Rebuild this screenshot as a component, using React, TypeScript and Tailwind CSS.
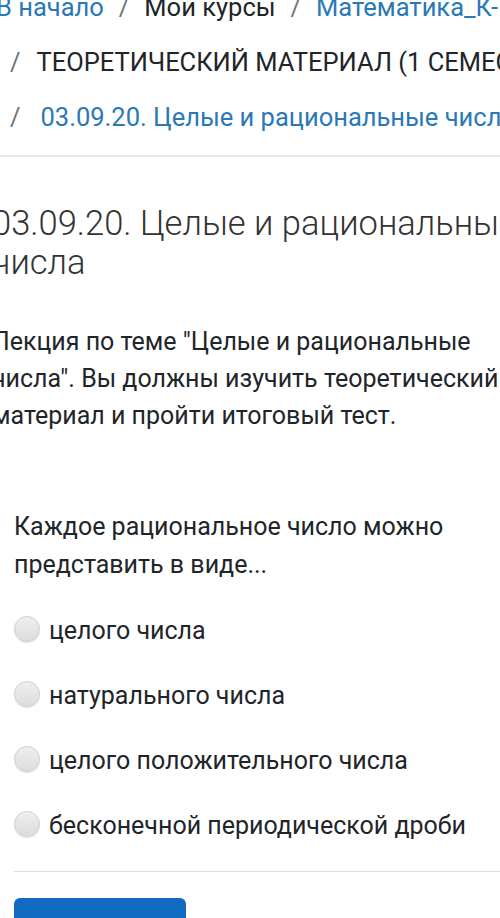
import React from "react";

const font = { fontFamily: "Roboto, 'Noto Sans', sans-serif" };

function Slash() {
  return <span className="text-[#6f757b] px-[15px]">/</span>;
}

function Radio() {
  return (
    <span className="shrink-0 w-[26px] h-[26px] rounded-full border border-[#cfcfcf] bg-gradient-to-b from-[#efefef] to-[#dcdcdc] shadow-[0_1px_1px_rgba(0,0,0,0.12)]" />
  );
}

const options = [
  "целого числа",
  "натурального числа",
  "целого положительного числа",
  "бесконечной периодической дроби",
];

export default function App() {
  return (
    <div className="w-[500px] h-[918px] overflow-hidden bg-white text-[#212529]" style={font}>
      {/* breadcrumb */}
      <div className="-mt-[20px] text-[25.5px] leading-[55px] whitespace-nowrap">
        <div className="-ml-[4px] flex">
          <span className="text-[#2a78b6]">В начало</span>
          <Slash />
          <span>Мои курсы</span>
          <Slash />
          <span className="text-[#2a78b6]">Математика_К-1 2020-2021</span>
        </div>
        <div className="flex pl-[10px]">
          <span className="text-[#6f757b] pr-[16px]">/</span>
          <span>ТЕОРЕТИЧЕСКИЙ МАТЕРИАЛ (1 СЕМЕСТР)</span>
        </div>
        <div className="flex pl-[10px]">
          <span className="text-[#6f757b] pr-[20px]">/</span>
          <span className="text-[#2a78b6]">03.09.20. Целые и рациональные числа</span>
        </div>
      </div>
      <div className="mt-[10px] h-[2px] bg-[#e6e6e6]" />

      {/* title */}
      <h2 className="mt-[47px] -ml-[8px] w-[540px] text-[34.5px] leading-[39px] font-light text-[#333]">
        03.09.20. Целые и рациональные числа
      </h2>

      {/* description */}
      <p className="mt-[41px] -ml-[8px] w-[520px] text-[25px] leading-[37px]">
        Лекция по теме "Целые и рациональные числа". Вы должны изучить теоретический материал и пройти итоговый тест.
      </p>

      {/* question */}
      <div className="pl-[14px]">
        <p className="mt-[74px] text-[25px] leading-[38px] w-[470px]">
          Каждое рациональное число можно представить в виде...
        </p>
        <div className="mt-[12px]">
          {options.map((o) => (
            <div key={o} className="h-[65px] flex items-center gap-[9px] text-[25px]">
              <Radio />
              <span className="pt-[4px]">{o}</span>
            </div>
          ))}
        </div>
        <div className="mt-[15px] h-px bg-[#dedede]" />
        <div className="mt-[26px] w-[172px] h-[60px] rounded-[6px] bg-[#116bc1]" />
      </div>
    </div>
  );
}
